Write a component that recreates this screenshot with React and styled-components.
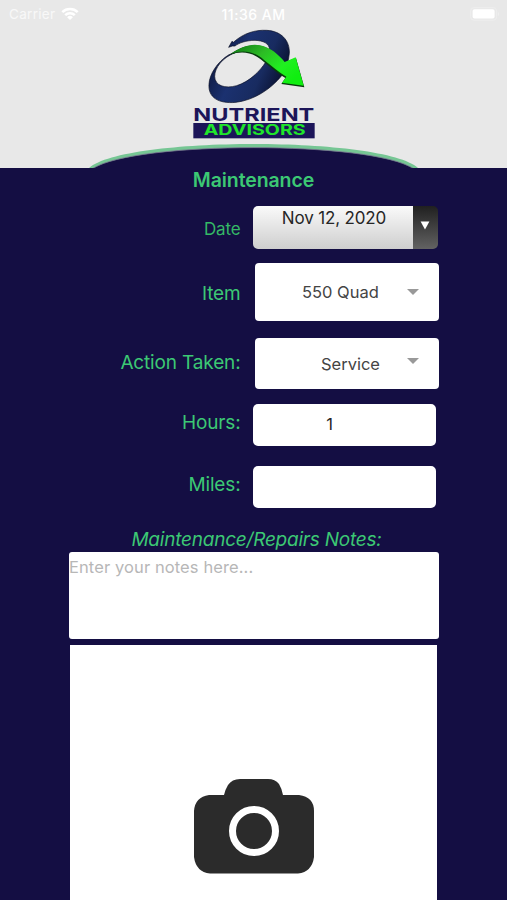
import React, { useState } from 'react';
import styled, { createGlobalStyle } from 'styled-components';

const App = () => {
  const [hours, setHours] = useState('1');
  const [miles, setMiles] = useState('');
  const [notes, setNotes] = useState('');

  return (
    <Container>
      <GlobalStyle />
      <Header>
        <StatusBar>
          <Carrier>
            <CarrierText>Carrier</CarrierText>
            <WifiIcon />
          </Carrier>
          <Time>11:36 AM</Time>
          <BatteryIcon />
        </StatusBar>
        <Logo />
        <HeaderArc />
      </Header>
      <Title>Maintenance</Title>
      <Form>
        <Row $height={43} $top={12}>
          <Label $size={17} $color="#34b866" $shift={2}>Date</Label>
          <DateSelect>
            <DateValue>Nov 12, 2020</DateValue>
            <DateToggle>
              <svg width="10" height="9" viewBox="0 0 10 9">
                <path d="M0.6 0.6H9.4L5 8.6Z" fill="#fff" />
              </svg>
            </DateToggle>
          </DateSelect>
        </Row>
        <Row $height={58} $top={14}>
          <Label $size={19} $shift={2}>Item</Label>
          <Select $padding={47}>
            550 Quad
            <Caret />
          </Select>
        </Row>
        <Row $height={51} $top={17}>
          <Label $size={19} $shift={-2}>Action Taken:</Label>
          <Select $padding={66}>
            Service
            <Caret $up={3} />
          </Select>
        </Row>
        <Row $height={42} $top={15}>
          <Label $size={19} $shift={-5}>Hours:</Label>
          <TextInput value={hours} onChange={(e) => setHours(e.target.value)} />
        </Row>
        <Row $height={42} $top={20}>
          <Label $size={19} $shift={-5}>Miles:</Label>
          <TextInput value={miles} onChange={(e) => setMiles(e.target.value)} />
        </Row>
      </Form>
      <NotesTitle>Maintenance/Repairs Notes:</NotesTitle>
      <Notes
        placeholder="Enter your notes here..."
        value={notes}
        onChange={(e) => setNotes(e.target.value)}
      />
      <PhotoArea>
        <CameraIcon />
      </PhotoArea>
    </Container>
  );
};

const WifiIcon = () => (
  <svg width="18" height="14" viewBox="0 0 18 14">
    <path d="M0.4 4.3A12.4 12.4 0 0 1 17.6 4.3L15.8 6.1A9.7 9.7 0 0 0 2.2 6.1Z" fill="#fff" />
    <path d="M3.3 7.3A8.1 8.1 0 0 1 14.7 7.3L12.9 9.1A5.5 5.5 0 0 0 5.1 9.1Z" fill="#fff" />
    <path d="M6.1 10.2A4.2 4.2 0 0 1 11.9 10.2L9 13.1Z" fill="#fff" />
  </svg>
);

const BatteryIcon = () => (
  <svg width="30" height="14" viewBox="0 0 30 14">
    <rect x="0.6" y="0.6" width="26" height="12.6" rx="3.4" fill="none" stroke="#eeeeee" />
    <rect x="2.6" y="2.2" width="22" height="9.4" rx="1.8" fill="#fff" />
    <path d="M28 4.8Q29.6 7 28 9.2Z" fill="#f1f1f1" />
  </svg>
);

const Logo = () => (
  <LogoSvg viewBox="0 18 450 336">
    <defs>
      <linearGradient id="ring" x1="0" y1="0.2" x2="1" y2="0.6">
        <stop offset="0" stopColor="#0a1130" />
        <stop offset="0.4" stopColor="#1b3170" />
        <stop offset="0.7" stopColor="#182b60" />
        <stop offset="1" stopColor="#080d28" />
      </linearGradient>
      <linearGradient id="arrow" x1="0" y1="0" x2="1" y2="0.6">
        <stop offset="0" stopColor="#0d7514" />
        <stop offset="0.4" stopColor="#2dbb25" />
        <stop offset="0.75" stopColor="#20f020" />
        <stop offset="1" stopColor="#10ee10" />
      </linearGradient>
    </defs>
    <path
      d="M146 76L156 58L160 61C190 34 225 23 260 25C303 27 330 55 328 94C326 119 318 142 306 160C271 203 222 234 168 241C115 246 84 226 87 187C88 157 112 119 147 98L168 91C127 106 104 138 104 163C104 191 135 201 170 191C207 180 240 148 258 119L269 82C267 64 250 56 225 55C199 55 176 63 165 72L157 72Z"
      fill="url(#ring)"
      stroke="#080c22"
      strokeWidth="2"
    />
    <path d="M149 98C173 79 209 65 240 71C272 78 295 98 313 121L348 108L373 196L304 186L316 168C293 154 274 138 251 119C221 92 190 85 149 98Z" fill="#073b0c" />
    <path d="M154 95C180 76 211 64 240 70C272 77 295 97 314 120L347 106L371 191L306 182L319 164C295 150 277 133 253 115C223 88 191 82 154 95Z" fill="url(#arrow)" />
    <LogoName x="40" y="296" textLength="363" lengthAdjust="spacingAndGlyphs">NUTRIENT</LogoName>
    <rect x="40" y="303" width="364" height="46" fill="#1c1559" />
    <LogoSub x="71" y="339" textLength="306" lengthAdjust="spacingAndGlyphs">ADVISORS</LogoSub>
  </LogoSvg>
);

const HeaderArc = () => (
  <ArcSvg viewBox="0 0 332 25">
    <path d="M1 25C36 -7 295 -7 330 25Z" fill="#76c694" />
    <path d="M4 26C46 -2.5 285 -2.5 326 26" fill="#140e43" stroke="#77718f" strokeWidth="0.8" />
  </ArcSvg>
);

const Caret = ({ $up = 0 }) => (
  <CaretSvg $up={$up} viewBox="0 0 12 6">
    <path d="M0 0H12L6 6Z" fill="#999" />
  </CaretSvg>
);

const CameraIcon = () => (
  <svg width="122" height="97" viewBox="0 0 122 97">
    <path
      d="M16 17H31Q32 12 35 7Q39 1 47 1H75Q82 1 86 6Q89 11 90 17H106Q121 19 121 33V79Q119 94 105 95.5H17Q3 94 1 79V33Q2 19 16 17Z"
      fill="#2b2b2b"
    />
    <circle cx="61" cy="53" r="21.5" fill="none" stroke="#fff" strokeWidth="7" />
  </svg>
);

const GlobalStyle = createGlobalStyle`
  * {
    box-sizing: border-box;
  }

  body {
    margin: 0;
    background: #140e43;
    font-family: Inter, "Liberation Sans", sans-serif;
  }
`;

const Container = styled.div`
  display: flex;
  flex-direction: column;
  height: 900px;
  overflow: hidden;
  background: #140e43;
`;

const Header = styled.div`
  display: flex;
  flex-direction: column;
  align-items: center;
  flex: none;
  height: 168px;
  background: #e8e8e8;
`;

const StatusBar = styled.div`
  display: grid;
  grid-template-columns: 1fr auto 1fr;
  align-items: center;
  width: 100%;
  height: 28px;
  padding: 0 7px 0 9px;
  color: #fff;
  font-size: 14px;

  > svg {
    justify-self: end;
  }
`;

const Carrier = styled.div`
  display: flex;
  align-items: center;
  gap: 6px;
`;

const CarrierText = styled.span`
  color: #f8f8f8;
  font-size: 13.5px;
  letter-spacing: 0.3px;
`;

const Time = styled.span`
  margin-right: 2px;
  font-weight: 500;
  letter-spacing: 0.5px;
`;

const LogoSvg = styled.svg`
  flex: none;
  width: 150px;
  height: 112px;
  margin-left: 3px;
`;

const LogoName = styled.text`
  font-family: Inter, sans-serif;
  font-size: 53px;
  font-weight: 700;
  fill: #1c1559;
`;

const LogoSub = styled.text`
  font-family: Inter, sans-serif;
  font-size: 42px;
  font-weight: 700;
  fill: #20e52b;
`;

const ArcSvg = styled.svg`
  flex: none;
  width: 332px;
  height: 25px;
  margin-top: 3px;
`;

const Title = styled.h1`
  flex: none;
  margin: 0;
  height: 26px;
  line-height: 24px;
  color: #3cc874;
  font-size: 19.5px;
  font-weight: 600;
  letter-spacing: -0.1px;
  text-align: center;
`;

const Form = styled.div`
  display: flex;
  flex-direction: column;
  flex: none;
`;

const Row = styled.div`
  display: grid;
  grid-template-columns: 241px auto;
  align-items: center;
  height: ${({ $height }) => $height}px;
  margin-top: ${({ $top }) => $top}px;
`;

const Label = styled.label`
  padding-right: 0.5px;
  padding-bottom: ${({ $shift = 0 }) => Math.max(0, -$shift)}px;
  padding-top: ${({ $shift = 0 }) => Math.max(0, $shift)}px;
  color: ${({ $color = '#3cc874' }) => $color};
  font-size: ${({ $size }) => $size}px;
  letter-spacing: -0.15px;
  text-align: right;
`;

const DateSelect = styled.div`
  display: flex;
  width: 185px;
  height: 43px;
  margin-left: 12px;
  border-radius: 5px;
  overflow: hidden;
`;

const DateValue = styled.div`
  flex: 1;
  padding-left: 2px;
  line-height: 24px;
  background: linear-gradient(#fafafa, #cecece);
  color: #262626;
  font-size: 17px;
  letter-spacing: -0.15px;
  text-align: center;
`;

const DateToggle = styled.div`
  display: flex;
  align-items: center;
  justify-content: center;
  width: 25px;
  padding: 0 2px 5px 0;
  background: linear-gradient(#202020, #626262);
`;

const Select = styled.div`
  display: flex;
  align-items: center;
  width: 184px;
  height: 100%;
  margin-left: 14px;
  padding: 0 20px 0 ${({ $padding }) => $padding}px;
  border-radius: 4px;
  background: #fff;
  color: #444;
  font-size: 16.5px;
`;

const CaretSvg = styled.svg`
  width: 12px;
  height: 6px;
  margin-left: auto;
  margin-bottom: ${({ $up }) => $up * 2}px;
`;

const TextInput = styled.input`
  width: 183px;
  height: 100%;
  margin-left: 12px;
  padding: 0 30px 2px 0;
  border: none;
  border-radius: 5px;
  outline: none;
  background: #fff;
  color: #262626;
  font-family: inherit;
  font-size: 16.5px;
  text-align: center;
`;

const NotesTitle = styled.h2`
  flex: none;
  margin: 18px 0 0 6px;
  height: 26px;
  line-height: 28px;
  color: #3cc874;
  font-size: 19px;
  font-style: italic;
  font-weight: 400;
  letter-spacing: -0.22px;
  text-align: center;
`;

const Notes = styled.textarea`
  flex: none;
  width: 370px;
  height: 87px;
  margin-left: 69px;
  padding: 4px 0;
  border: none;
  border-radius: 3px;
  outline: none;
  resize: none;
  background: #fff;
  font-family: inherit;
  font-size: 16.5px;
  letter-spacing: 0.1px;
  line-height: 22px;

  &::placeholder {
    color: #b7b7b7;
  }
`;

const PhotoArea = styled.div`
  display: flex;
  justify-content: center;
  flex: 1;
  width: 367px;
  margin: 6px 0 0 70px;
  padding-top: 133px;
  background: #fff;
`;

export default App;
